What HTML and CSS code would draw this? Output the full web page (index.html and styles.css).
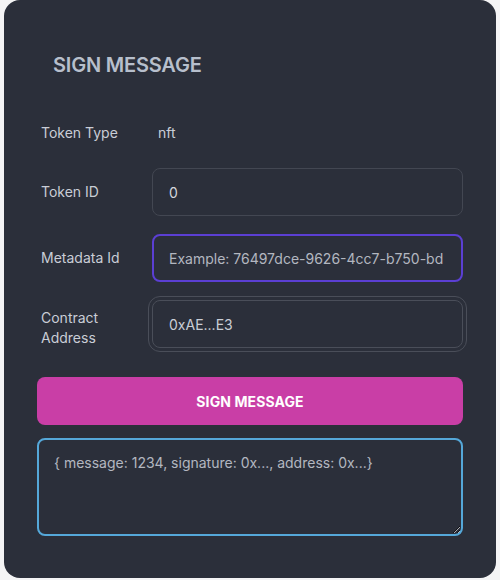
FILE: index.html
```html
<!DOCTYPE html>
<html>
<head>
<meta charset="utf-8">
<link rel="stylesheet" href="styles.css">
</head>
<body>
<div class="card">
  <h1 class="title">SIGN MESSAGE</h1>
  <div class="form">
    <div class="row row-static">
      <span class="label">Token Type</span>
      <span class="value">nft</span>
    </div>
    <div class="row">
      <label class="label">Token ID</label>
      <input class="input" type="text" value="0">
    </div>
    <div class="row">
      <label class="label">Metadata Id</label>
      <input class="input input-focus" type="text" placeholder="Example: 76497dce-9626-4cc7-b750-bd">
    </div>
    <div class="row">
      <label class="label label-low">Contract<br>Address</label>
      <input class="input input-ring" type="text" value="0xAE...E3" disabled>
    </div>
  </div>
  <button class="btn">SIGN MESSAGE</button>
  <textarea class="output" placeholder="{ message: 1234, signature: 0x..., address: 0x...}"></textarea>
</div>
</body>
</html>
```
FILE: styles.css
```css
html, body {
  margin: 0;
  padding: 0;
  background: #f4f4f5;
}
body {
  padding: 0 4px 2px 4px;
  font-family: Inter, "Liberation Sans", sans-serif;
}
.card {
  box-sizing: border-box;
  background: #2b2f3a;
  border-radius: 16px;
  height: 578px;
  padding: 53px 33px 0 33px;
  display: flex;
  flex-direction: column;
}
.title {
  margin: 0 0 0 16px;
  font-size: 20px;
  line-height: 24px;
  font-weight: 600;
  color: #b7bfcc;
  letter-spacing: -0.2px;
}
.form {
  display: flex;
  flex-direction: column;
  gap: 18px;
  margin-top: 46px;
}
.row {
  display: grid;
  grid-template-columns: 115px 1fr;
  align-items: center;
}
.row-static {
  margin-bottom: 7px;
}
.label {
  padding-left: 4px;
  font-size: 14px;
  line-height: 20px;
  color: #c9cdd6;
}
.label-low {
  margin-top: 8px;
}
.value {
  padding-left: 6px;
  font-size: 14px;
  line-height: 20px;
  color: #c9cdd6;
}
.input {
  box-sizing: border-box;
  height: 48px;
  width: 100%;
  background: #2b2f3a;
  border: 1px solid #434752;
  border-radius: 8px;
  padding: 0 16px;
  font-family: Inter, "Liberation Sans", sans-serif;
  font-size: 14px;
  color: #d3d6dd;
  outline: none;
}
.input::placeholder {
  color: #b3b7c0;
  opacity: 1;
}
.input-focus {
  border: 2px solid #5b3fd3;
  padding: 0 15px;
}
.input-ring {
  border-color: #4a4e59;
  outline: 1px solid #4a4e59;
  outline-offset: 3px;
  color: #c9cdd6;
  -webkit-text-fill-color: #c9cdd6;
}
.btn {
  margin-top: 29px;
  height: 48px;
  border: none;
  border-radius: 8px;
  background: #c93ea6;
  color: #ffffff;
  font-family: Inter, "Liberation Sans", sans-serif;
  font-size: 14px;
  font-weight: 700;
  letter-spacing: 0.1px;
}
.output {
  box-sizing: border-box;
  margin-top: 13px;
  height: 98px;
  width: 100%;
  background: #2b2f3a;
  border: 2px solid #55a8d9;
  border-radius: 8px;
  padding: 13px 15px;
  font-family: Inter, "Liberation Sans", sans-serif;
  font-size: 14px;
  line-height: 20px;
  color: #d3d6dd;
  outline: none;
}
.output::placeholder {
  color: #b3b7c0;
  opacity: 1;
}
```
